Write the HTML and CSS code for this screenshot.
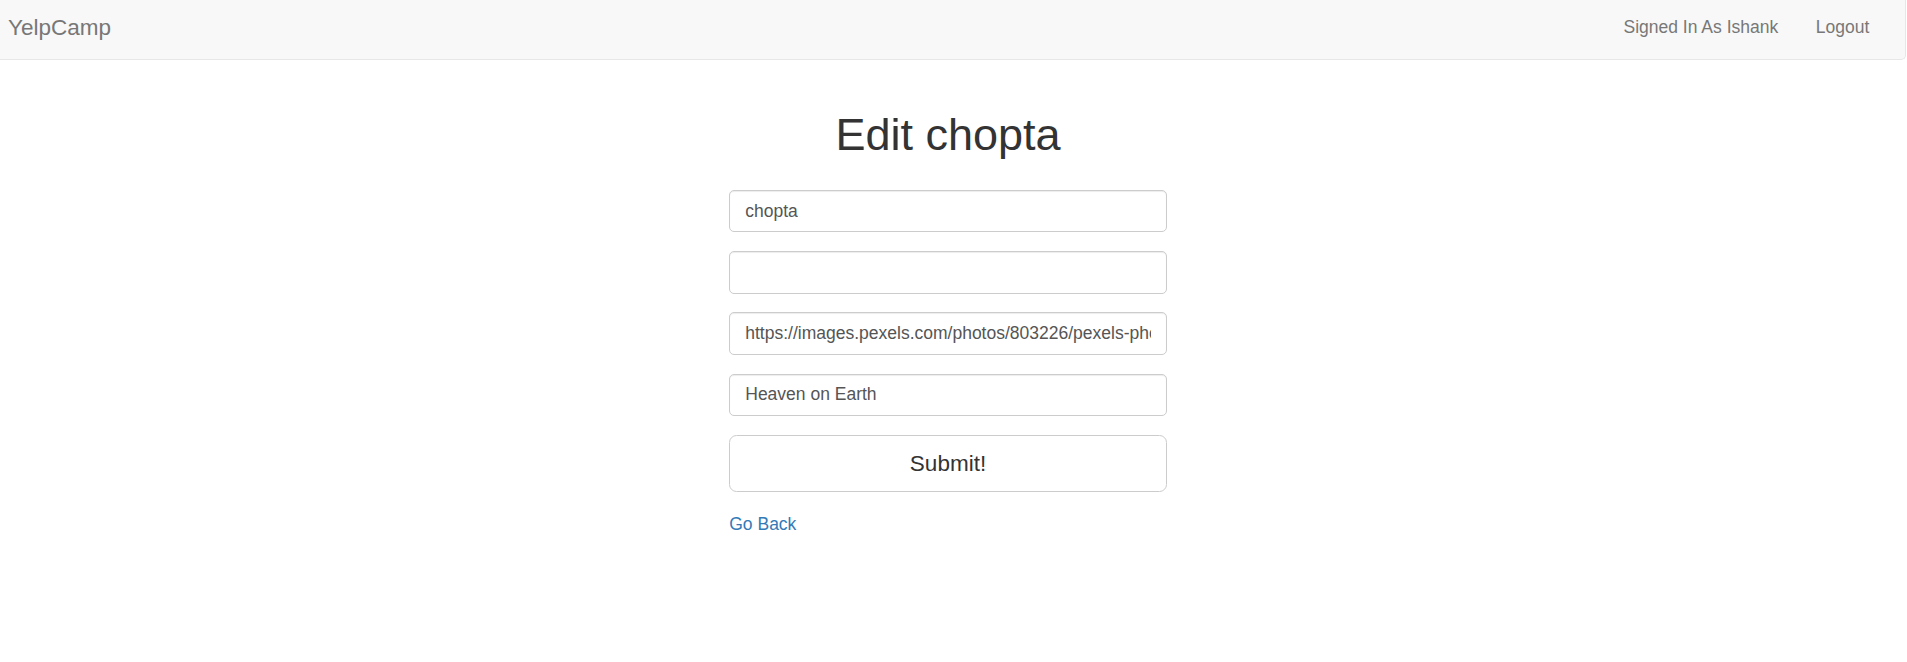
FILE: index.html
```html
<!DOCTYPE html>
<html lang="en">
<head>
<meta charset="utf-8">
<title>YelpCamp</title>
<link rel="stylesheet" href="styles.css">
</head>
<body>
<nav class="navbar">
  <a class="brand" href="#">YelpCamp</a>
  <ul class="nav-links">
    <li><a href="#">Signed In As Ishank</a></li>
    <li><a href="#">Logout</a></li>
  </ul>
</nav>
<main class="page">
  <div class="column">
    <h1 class="title">Edit chopta</h1>
    <form class="edit-form">
      <div class="form-group"><input class="form-control" type="text" value="chopta"></div>
      <div class="form-group"><input class="form-control" type="text" value=""></div>
      <div class="form-group"><input class="form-control" type="text" value="https://images.pexels.com/photos/803226/pexels-photo-803226.jpeg"></div>
      <div class="form-group"><input class="form-control" type="text" value="Heaven on Earth"></div>
      <div class="form-group"><button class="btn-submit" type="button">Submit!</button></div>
    </form>
    <a class="back-link" href="#">Go Back</a>
  </div>
</main>
</body>
</html>
```
FILE: styles.css
```css
* { box-sizing: border-box; }
html, body { margin: 0; padding: 0; background: #fff; }
body {
  font-family: "Liberation Sans", Arial, Helvetica, sans-serif;
  color: #333;
}
a { text-decoration: none; }

.navbar {
  display: flex;
  justify-content: space-between;
  align-items: flex-start;
  height: 60px;
  width: 1906px;
  background: #f8f8f8;
  border-bottom: 1px solid #e7e7e7;
  border-right: 1px solid #e7e7e7;
  border-bottom-right-radius: 5px;
}
.brand {
  display: block;
  padding: 14.7px 0 0 8px;
  font-size: 22.5px;
  line-height: 25px;
  color: #777;
}
.nav-links {
  display: flex;
  list-style: none;
  margin: 0;
  padding: 0 17px 0 0;
}
.nav-links a {
  display: block;
  padding: 17.2px 18.75px 0;
  font-size: 17.5px;
  line-height: 20px;
  color: #777;
}

.page {
  width: 1896px;
}
.column {
  width: 437.5px;
  margin: 0 auto;
}
.title {
  margin: 49.7px 0 30.8px;
  font-size: 45px;
  line-height: 49.5px;
  font-weight: 500;
  text-align: center;
  color: #333;
}
.edit-form { margin: 0; }
.form-group { margin-bottom: 18.75px; }
.form-control {
  display: block;
  width: 100%;
  height: 42.5px;
  padding: 0 15px;
  font-family: "Liberation Sans", Arial, Helvetica, sans-serif;
  font-size: 17.5px;
  color: #555;
  background: #fff;
  border: 1.25px solid #ccc;
  border-radius: 5px;
  box-shadow: inset 0 1px 1px rgba(0,0,0,.075);
  outline: none;
}
.btn-submit {
  display: block;
  width: 100%;
  height: 57.5px;
  font-family: "Liberation Sans", Arial, Helvetica, sans-serif;
  font-size: 22.5px;
  color: #333;
  background: #fff;
  border: 1.25px solid #ccc;
  border-radius: 7.5px;
}
.back-link {
  display: inline-block;
  margin-top: 1.2px;
  font-size: 17.5px;
  line-height: 25px;
  color: #337ab7;
}
```
